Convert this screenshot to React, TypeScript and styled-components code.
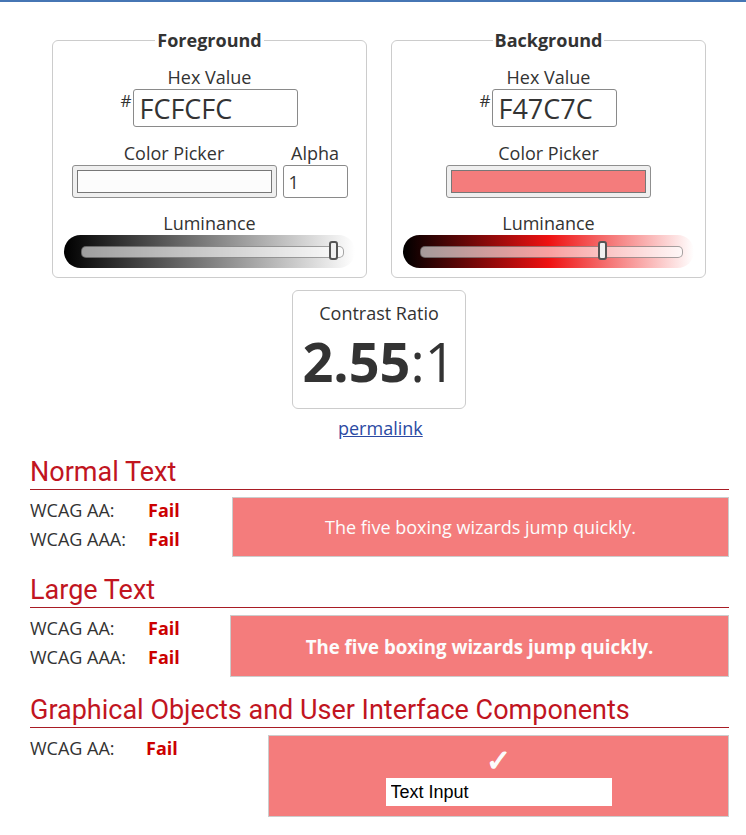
import React from 'react'
import styled, { createGlobalStyle } from 'styled-components'

const GlobalStyle = createGlobalStyle`
  body {
    margin: 0;
    font-family: "Open Sans", "Noto Sans", sans-serif;
    font-size: 18px;
    color: #333;
    background: #fff;
  }
  input { font-family: inherit; }
`

const TopBar = styled.div`
  height: 2px;
  background: #4676b4;
`

const Panels = styled.div`
  display: flex;
  gap: 24px;
  padding-left: 52px;
  margin-top: 26px;
`

const Panel = styled.fieldset`
  box-sizing: border-box;
  width: 315px;
  margin: 0;
  padding: 13px 10px 9px;
  border: 1px solid #ccc;
  border-radius: 6px;
  display: flex;
  flex-direction: column;
  align-items: center;
  > legend {
    margin: 0 auto;
    padding: 0 2px;
    font-weight: 700;
    font-size: 18px;
    line-height: 24px;
    color: #333;
  }
`

const Label = styled.div<{ $gap?: number }>`
  line-height: 24px;
  text-align: center;
  margin-top: ${p => p.$gap ?? 0}px;
`

const HexRow = styled.div`
  display: flex;
  align-items: flex-start;
`

const Hash = styled.span`
  font-size: 17px;
  line-height: 18px;
  margin-top: 3px;
  margin-right: 2px;
`

const HexInput = styled.input<{ $w: number }>`
  box-sizing: border-box;
  width: ${p => p.$w}px;
  height: 38px;
  padding: 0 5px;
  border: 1px solid #8a8a8a;
  border-radius: 3px;
  font-size: 27px;
  color: #333;
  outline: none;
`

const PickerRow = styled.div`
  display: flex;
  gap: 6px;
  margin-top: 14px;
`

const PickerCol = styled.div`
  display: flex;
  flex-direction: column;
  align-items: center;
`

const Picker = styled.div`
  box-sizing: border-box;
  width: 205px;
  height: 33px;
  padding: 4px 4px;
  border: 1px solid #8f8f8f;
  border-radius: 3px;
  background: #efefef;
  display: flex;
`

const Swatch = styled.span<{ $color: string }>`
  flex: 1;
  border: 1px solid #777;
  background: ${p => p.$color};
`

const AlphaInput = styled.input`
  box-sizing: border-box;
  width: 65px;
  height: 33px;
  padding: 0 5px;
  border: 1px solid #8a8a8a;
  border-radius: 3px;
  font-size: 18px;
  color: #333;
  outline: none;
`

const Lum = styled.div<{ $grad: string }>`
  position: relative;
  box-sizing: border-box;
  width: 291px;
  height: 33px;
  border-radius: 17px;
  background: ${p => p.$grad};
  padding: 0 11px 0 17px;
  display: flex;
  align-items: center;
`

const Track = styled.div`
  position: relative;
  flex: 1;
  height: 10px;
  border-radius: 5px;
  border: 1px solid rgba(0, 0, 0, 0.35);
  background: rgba(255, 255, 255, 0.6);
`

const Thumb = styled.div`
  position: absolute;
  top: -6px;
  width: 9px;
  height: 19px;
  box-sizing: border-box;
  margin-left: -4px;
  border: 2px solid #555;
  border-radius: 3px;
  background: #f0f0f0;
`

const RatioBox = styled.div`
  box-sizing: border-box;
  width: 174px;
  height: 119px;
  margin: 12px 0 0 292px;
  padding-top: 10px;
  border: 1px solid #ccc;
  border-radius: 6px;
  text-align: center;
`

const Ratio = styled.div`
  font-size: 54px;
  line-height: 56px;
  margin-top: 8px;
  > b { font-weight: 700; }
`

const Permalink = styled.a`
  display: block;
  width: fit-content;
  margin: 7px 0 0 338px;
  line-height: 24px;
  color: #2b4aa3;
  text-decoration: underline;
`

const Results = styled.div`
  padding: 0 17px 20px 30px;
`

const Heading = styled.h2<{ $top: number }>`
  margin: ${p => p.$top}px 0 0;
  font-family: Roboto, "Liberation Sans", sans-serif;
  font-weight: 400;
  font-size: 27px;
  line-height: 32px;
  padding-bottom: 1px;
  color: #c1151f;
  border-bottom: 1px solid #a81c24;
`

const Body = styled.div`
  display: flex;
  margin-top: 6px;
`

const Checks = styled.div<{ $w: number }>`
  width: ${p => p.$w}px;
  flex-shrink: 0;
`

const CheckRow = styled.div<{ $label: number }>`
  display: flex;
  line-height: 29px;
  > span:first-child { width: ${p => p.$label}px; }
  > b { color: #c00; font-weight: 700; }
`

const Sample = styled.div<{ $h: number; $top: number; $bold?: boolean }>`
  box-sizing: border-box;
  flex: 1;
  height: ${p => p.$h}px;
  margin-top: ${p => p.$top}px;
  border: 1px solid #ccc;
  background: #f47c7c;
  color: #fcfcfc;
  display: flex;
  align-items: center;
  justify-content: center;
  font-size: ${p => (p.$bold ? 18.67 : 18)}px;
  font-weight: ${p => (p.$bold ? 700 : 400)};
`

const UiSample = styled(Sample)`
  flex-direction: column;
  justify-content: flex-start;
  padding-top: 11px;
`

const Check = styled.div`
  font-family: "DejaVu Sans", sans-serif;
  font-weight: 700;
  font-size: 30px;
  line-height: 28px;
  color: #fcfcfc;
  -webkit-text-stroke: 1.2px #fcfcfc;
`

const TextInput = styled.input`
  box-sizing: border-box;
  width: 226px;
  height: 28px;
  margin-top: 3px;
  padding: 0 5px;
  border: none;
  background: #fff;
  color: #000;
  font-family: "Liberation Sans", Arial, sans-serif;
  font-size: 18px;
  outline: none;
`

function Luminance({ grad, pos }: { grad: string; pos: number }) {
  return (
    <Lum $grad={grad}>
      <Track>
        <Thumb style={{ left: `${pos}%` }} />
      </Track>
    </Lum>
  )
}

function Row({ label, w = 118 }: { label: string; w?: number }) {
  return (
    <CheckRow $label={w}>
      <span>{label}</span>
      <b>Fail</b>
    </CheckRow>
  )
}

export default function App() {
  return (
    <>
      <GlobalStyle />
      <TopBar />
      <Panels>
        <Panel>
          <legend>Foreground</legend>
          <Label>Hex Value</Label>
          <HexRow>
            <Hash>#</Hash>
            <HexInput $w={165} value="FCFCFC" readOnly />
          </HexRow>
          <PickerRow>
            <PickerCol>
              <Label>Color Picker</Label>
              <Picker><Swatch $color="#fcfcfc" /></Picker>
            </PickerCol>
            <PickerCol>
              <Label>Alpha</Label>
              <AlphaInput value="1" readOnly />
            </PickerCol>
          </PickerRow>
          <Label $gap={13}>Luminance</Label>
          <Luminance grad="linear-gradient(to right, #000, #fff)" pos={96} />
        </Panel>
        <Panel>
          <legend>Background</legend>
          <Label>Hex Value</Label>
          <HexRow>
            <Hash>#</Hash>
            <HexInput $w={125} value="F47C7C" readOnly />
          </HexRow>
          <PickerRow>
            <PickerCol>
              <Label>Color Picker</Label>
              <Picker><Swatch $color="#f47c7c" /></Picker>
            </PickerCol>
          </PickerRow>
          <Label $gap={13}>Luminance</Label>
          <Luminance grad="linear-gradient(to right, #000, #ee1111 50%, #fff)" pos={69.5} />
        </Panel>
      </Panels>

      <RatioBox>
        <div>Contrast Ratio</div>
        <Ratio><b>2.55</b>:1</Ratio>
      </RatioBox>
      <Permalink href="#">permalink</Permalink>

      <Results>
        <Heading $top={16}>Normal Text</Heading>
        <Body>
          <Checks $w={202}>
            <Row label="WCAG AA:" />
            <Row label="WCAG AAA:" />
          </Checks>
          <Sample $h={60} $top={1}>The five boxing wizards jump quickly.</Sample>
        </Body>

        <Heading $top={17}>Large Text</Heading>
        <Body>
          <Checks $w={200}>
            <Row label="WCAG AA:" />
            <Row label="WCAG AAA:" />
          </Checks>
          <Sample $h={62} $top={1} $bold>The five boxing wizards jump quickly.</Sample>
        </Body>

        <Heading $top={17}>Graphical Objects and User Interface Components</Heading>
        <Body>
          <Checks $w={238}>
            <Row label="WCAG AA:" w={116} />
          </Checks>
          <UiSample $h={82} $top={1}>
            <Check>✓</Check>
            <TextInput value="Text Input" readOnly />
          </UiSample>
        </Body>
      </Results>
    </>
  )
}
